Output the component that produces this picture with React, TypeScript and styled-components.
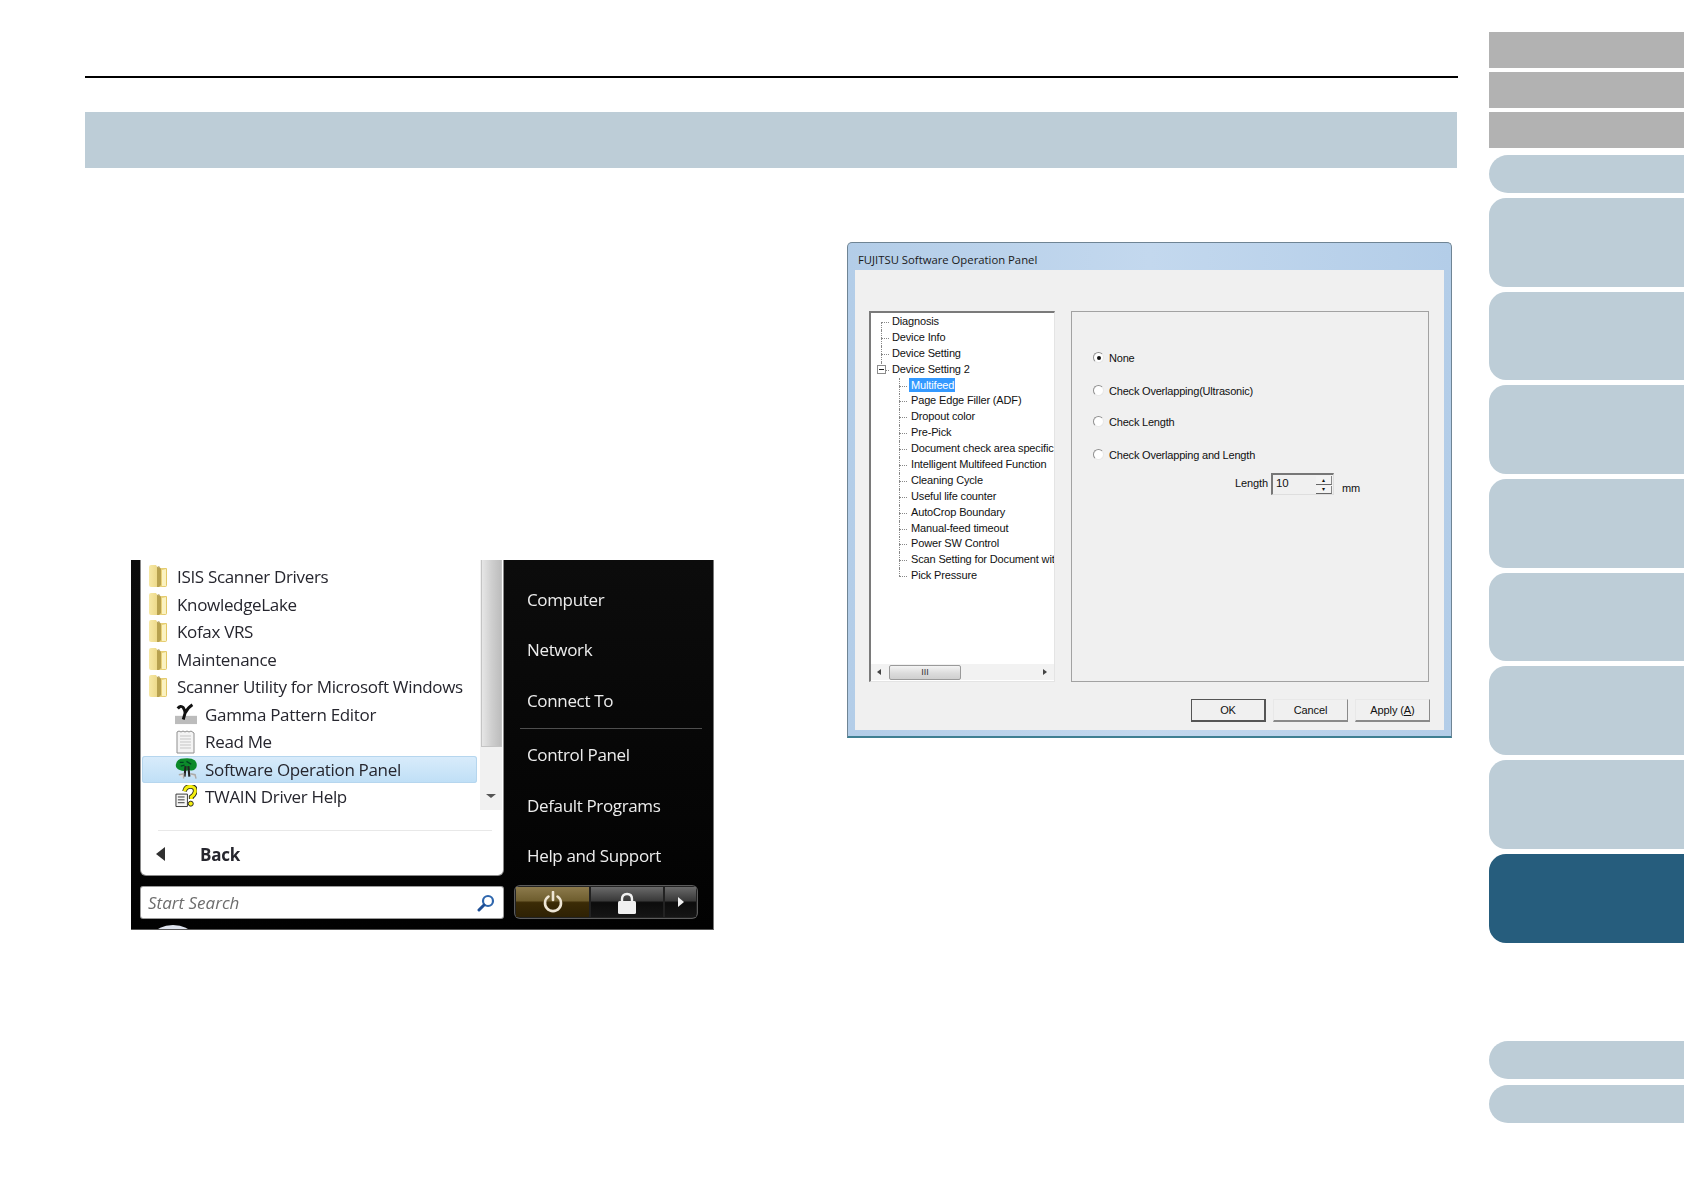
import React from "react";
import styled, { createGlobalStyle } from "styled-components";

const Global = createGlobalStyle`
  html, body { margin: 0; padding: 0; background: #fff; overflow: hidden; }
  * { box-sizing: border-box; }
`;

const Page = styled.div`
  width: 1684px; height: 1190px; display: flex; background: #fff;
  font-family: "Liberation Sans", Arial, sans-serif;
`;
const Main = styled.main`
  width: 1373px; margin-left: 85px; padding-top: 76px; flex: none;
`;
const Rule = styled.div`height: 2px; background: #000;`;
const Banner = styled.div`height: 56px; margin: 34px 1px 0 0; background: #bdcdd7;`;
const Figures = styled.div`display: flex; align-items: flex-start; margin-top: 74px;`;

/* Sidebar */
const Side = styled.nav`
  width: 195px; margin-left: 31px; padding-top: 32px; display: flex; flex-direction: column; flex: none;
`;
const GrayTab = styled.div`height: 36px; margin-bottom: 4px; background: #b2b2b2;`;
const Pill = styled.div<{ $top: number }>`
  height: 38px; margin-top: ${p => p.$top}px; background: #bdcdd7; border-radius: 19px 0 0 19px; flex: none;
`;
const Chapter = styled.div<{ $active?: boolean }>`
  height: 88.7px; margin-top: 5px; border-radius: 17px 0 0 17px; flex: none;
  background: ${p => (p.$active ? "#265d7d" : "#bdcdd7")};
`;

/* Start menu */
const StartMenu = styled.div`
  width: 583px; height: 370px; margin: 318px 0 0 46px; flex: none; display: flex; position: relative; overflow: hidden;
  background: linear-gradient(#0c0c0c, #020202);
  border-right: 1px solid #777; border-bottom: 1px solid #555;
  font-family: "Open Sans", "Noto Sans", sans-serif;
  filter: blur(0.35px);
`;
const LeftCol = styled.div`width: 372px; padding-left: 10px; flex: none; display: flex; flex-direction: column;`;
const ProgramPanel = styled.div`
  height: 315px; flex: none; background: #fff; border-radius: 0 0 5px 5px;
  box-shadow: 0 0 0 1px #8a8a8a; display: flex; flex-direction: column;
`;
const ListArea = styled.div`height: 250px; display: flex; flex: none;`;
const List = styled.div`width: 339px; padding: 3px 3px 0 1px; flex: none;`;
const Row = styled.div<{ $sub?: boolean; $hot?: boolean }>`
  height: 27.5px; display: flex; align-items: center;
  padding-left: ${p => (p.$sub ? 33 : 6)}px;
  gap: ${p => (p.$sub ? 8 : 9)}px;
  font-size: 17px; color: #26262e; white-space: nowrap; letter-spacing: -0.33px;
  border-radius: 3px;
  ${p => p.$hot && `
    background: linear-gradient(#d9ecfb, #bfdff6);
    box-shadow: inset 0 0 0 1px #b6d6ee;
  `}
`;
const IconSlot = styled.span`width: 22px; height: 24px; flex: none; display: flex; align-items: center; justify-content: center;`;
const Scroll = styled.div`
  width: 22px; background: #f1f1f1; display: flex; flex-direction: column; align-items: center; flex: none;
`;
const Thumb = styled.div`
  width: 21px; height: 187px; background: linear-gradient(90deg, #e6e6e6, #cfcfcf 50%, #bdbdbd);
  border: 1px solid #c4c4c4; border-top: none;
`;
const ScrollDown = styled.div`
  margin-top: 47px; width: 0; height: 0;
  border-left: 5px solid transparent; border-right: 5px solid transparent; border-top: 4px solid #555;
`;
const PanelSep = styled.div`height: 1px; margin: 20px 11px 0 17px; background: #e8e8e8;`;
const BackRow = styled.div`
  height: 46px; display: flex; align-items: center; padding: 3px 0 0 15px; gap: 35px;
  font-size: 17px; font-weight: 700; color: #26262e; letter-spacing: -0.25px;
`;
const BackArrow = styled.div`
  width: 0; height: 0; border-top: 7px solid transparent; border-bottom: 7px solid transparent; border-right: 9px solid #303030;
`;
const SearchBox = styled.div`
  height: 31px; margin-top: 12px; flex: none; background: #fff; border-radius: 2px; box-shadow: 0 0 0 1px #9a9a9a;
  display: flex; align-items: center; justify-content: space-between; padding: 0 8px 0 7px;
  font-size: 17px; font-style: italic; color: #6d6d6d;
`;
const Remnant = styled.div`
  position: absolute; left: 24px; bottom: -14px; width: 36px; height: 18px; border-radius: 50%; background: #dfe4ee;
`;
const RightCol = styled.div`flex: 1; padding-top: 14px; display: flex; flex-direction: column; color: #ededed;`;
const Place = styled.div`
  height: 50.5px; flex: none; padding-left: 24px; display: flex; align-items: center; font-size: 17px; letter-spacing: -0.35px;
`;
const PlaceSep = styled.div`height: 1px; flex: none; margin: 2px 11px 1px 17px; background: #4e4e4e;`;
const PowerBar = styled.div`
  width: 182px; height: 32px; margin: 5px 0 0 12px; flex: none; padding: 1px; display: flex; gap: 2px;
  border-radius: 5px; box-shadow: 0 0 0 1px #5c5c5c; background: #222;
`;
const PowerBtn = styled.div<{ $w: number; $amber?: boolean }>`
  width: ${p => p.$w}px; display: flex; align-items: center; justify-content: center; flex: none;
  background: ${p => p.$amber
    ? "linear-gradient(#8c7a4c 0%, #6f5e2f 45%, #3b2b06 52%, #2e2104 100%)"
    : "linear-gradient(#6a6a6a 0%, #3a3a3a 45%, #0c0c0c 52%, #151515 100%)"};
`;

/* Dialog */
const Dialog = styled.div`
  width: 605px; height: 496px; margin-left: 133px; flex: none; padding: 0 7px 6px 7px; display: flex; flex-direction: column;
  background: linear-gradient(90deg, #b3cde8, #c3d8ee 50%, #b3cde8);
  border: 1px solid #6f8494; border-bottom: 2px solid #3f7f92; border-radius: 5px 5px 0 0;
  font-family: "Liberation Sans", Arial, sans-serif; color: #111;
`;
const TitleBar = styled.div`
  height: 27px; flex: none; padding: 6px 0 0 3px; display: flex; align-items: center; font-family: "Open Sans", sans-serif; font-size: 11.3px; color: #1a1a1a;
`;
const Client = styled.div`
  flex: 1; background: #f0f0f0; padding: 41px 14px 0 14px; display: flex; flex-direction: column;
`;
const Panes = styled.div`display: flex; gap: 16px; height: 371px; flex: none;`;
const Tree = styled.div`
  width: 186px; flex: none; background: #fff; display: flex; flex-direction: column; position: relative;
  border-top: 2px solid #7a7a7a; border-left: 2px solid #7a7a7a; border-right: 1px solid #e4e4e4; border-bottom: 1px solid #e4e4e4;
`;
const TreeBody = styled.div`flex: 1; padding-top: 1px; overflow: hidden;`;
const TreeRow = styled.div<{ $child?: boolean; $last?: boolean; $first?: boolean }>`
  height: 15.9px; position: relative; white-space: nowrap; font-size: 11px; line-height: 15.9px;
  padding-left: ${p => (p.$child ? 40 : 21)}px; letter-spacing: -0.15px;
  &::before {
    content: ""; position: absolute; top: 8px; width: 8px;
    left: ${p => (p.$child ? 28 : 10)}px; border-top: 1px dotted #888;
  }
  &::after {
    content: ""; position: absolute; top: ${p => (p.$first ? 8 : 0)}px;
    left: ${p => (p.$child ? 28 : 10)}px;
    height: ${p => (p.$last ? 8 : p.$first ? 8 : 16)}px; border-left: 1px dotted #888;
  }
`;
const Selected = styled.span`
  display: inline-block; background: #3399ff; color: #fff; line-height: 14px; padding: 0 1px 0 2px; margin-left: -2px;
`;
const Expander = styled.span`
  position: absolute; z-index: 1; left: 6px; top: 3px; width: 9px; height: 9px; background: #fff; border: 1px solid #8c8c8c;
  &::after { content: ""; position: absolute; left: 1px; top: 3px; width: 5px; height: 1px; background: #222; }
`;
const HBar = styled.div`
  height: 16px; margin-bottom: 1px; flex: none; background: #f2f2f2; display: flex; align-items: center; padding: 0 7px 0 6px;
`;
const ArrowL = styled.div`
  width: 0; height: 0; border-top: 3px solid transparent; border-bottom: 3px solid transparent; border-right: 4px solid #444;
`;
const ArrowR = styled.div`
  width: 0; height: 0; border-top: 3px solid transparent; border-bottom: 3px solid transparent; border-left: 4px solid #444;
`;
const HThumb = styled.div`
  width: 72px; height: 15px; margin: 0 auto 0 8px; border: 1px solid #9a9a9a; border-radius: 2px;
  background: linear-gradient(#f4f4f4, #dcdcdc 55%, #cfcfcf);
  display: flex; align-items: center; justify-content: center; font-size: 9px; color: #333; letter-spacing: 0;
`;
const Options = styled.div`
  width: 358px; flex: none; border: 1px solid #a2a2a2; padding: 38px 0 0 21px; display: flex; flex-direction: column; font-size: 11px;
`;
const OptionRow = styled.div<{ $mt: number }>`
  display: flex; align-items: center; gap: 5px; height: 16px; margin-top: ${p => p.$mt}px; letter-spacing: -0.2px;
`;
const Radio = styled.span<{ $on?: boolean }>`
  width: 11px; height: 11px; margin-top: -2px; border-radius: 50%; background: #fff; position: relative; flex: none;
  border: 1px solid #8f8f8f; border-right-color: #e8e8e8; border-bottom-color: #e8e8e8;
  ${p => p.$on && `
    &::after { content: ""; position: absolute; left: 3px; top: 3px; width: 4px; height: 4px; border-radius: 50%; background: #111; }
  `}
`;
const LengthRow = styled.div`
  display: flex; align-items: flex-start; margin: 10px 0 0 142px; height: 24px; letter-spacing: -0.1px;
`;
const LengthLabel = styled.span`line-height: 20px; margin-right: 3px;`;
const Spin = styled.div`
  width: 63px; height: 22px; flex: none; display: flex; justify-content: space-between; padding: 0 1px 0 3px; line-height: 17px; font-size: 11.5px;
  border: 1px solid #dedede; border-top: 2px solid #777; border-left: 2px solid #777; background: #f0f0f0;
`;
const SpinBtns = styled.div`width: 16px; display: flex; flex-direction: column; gap: 1px; padding-top: 1px;`;
const SpinBtn = styled.div`
  flex: 1; background: #f3f3f3; border-bottom: 1px solid #666; border-right: 1px solid #888;
  display: flex; align-items: center; justify-content: center; font-size: 6px; line-height: 1;
`;
const Unit = styled.span`margin: 7px 0 0 8px; line-height: 16px;`;
const Footer = styled.div`display: flex; justify-content: flex-end; gap: 7px; margin: 17px 0 0 0;`;
const Btn = styled.div<{ $def?: boolean }>`
  width: 75px; height: 23px; display: flex; align-items: center; justify-content: center;
  background: #f0f0f0; font-size: 11px; letter-spacing: -0.1px;
  border-top: 1px solid #e8e8e8; border-left: 1px solid ${p => (p.$def ? "#555" : "#e8e8e8")};
  border-right: ${p => (p.$def ? "2px solid #555" : "1px solid #8a8a8a")};
  border-bottom: 2px solid ${p => (p.$def ? "#555" : "#8a8a8a")};
  ${p => p.$def && "border-top-color: #555;"}
`;
const Mnemonic = styled.span`text-decoration: underline;`;

const Folder = () => (
  <svg width="20" height="25" viewBox="0 0 20 25">
    <defs><linearGradient id="fg" x1="0" x2="1"><stop offset="0" stopColor="#f7e9a8" /><stop offset="1" stopColor="#e2c765" /></linearGradient></defs>
    <path d="M1 3 Q1 1 3 1 L8 1 L10 4 L18 4 Q19 4 19 5 L19 21 Q19 23 17 23 L3 23 Q1 23 1 21 Z" fill="url(#fg)" />
    <path d="M9 3 L11 2 L13 5 L13 21 L11 23 L9 23 Z" fill="#a68f3e" opacity=".75" />
    <path d="M14 6 L18 5 L18 22 L14 22 Z" fill="#fbf2c0" />
  </svg>
);
const GammaIcon = () => (
  <svg width="24" height="22" viewBox="0 0 24 22">
    <path d="M0 13 H24 V22 H0 Z" fill="#bcbcbc" />
    <path d="M3 5 Q6 1 9 4 Q11 7 11 10 L9 17 M19 1 Q14 4 11 10" fill="none" stroke="#111" strokeWidth="3.2" />
  </svg>
);
const NoteIcon = () => (
  <svg width="20" height="24" viewBox="0 0 20 24">
    <path d="M1 2 L3 1 L5 2 L7 1 L9 2 L11 1 L13 2 L15 1 L18 3 V23 H1 Z" fill="#f4f4f4" stroke="#8e8e8e" />
    <path d="M4 6 H15 M4 9 H15 M4 12 H15 M4 15 H15 M4 18 H15" stroke="#c5c5c5" />
  </svg>
);
const TreeIcon = () => (
  <svg width="23" height="22" viewBox="0 0 23 22">
    <path d="M1 6 Q2 0 9 0 Q17 -1 21 2 Q24 6 22 10 Q19 14 15 12 Q9 14 5 12 Q0 10 1 6 Z" fill="#0c8a2a" />
    <path d="M5 4 H9 M12 3 L17 6 M6 8 L10 7" stroke="#042" strokeWidth="1.4" />
    <path d="M11 8 L10 19 M14 8 L15 19" stroke="#222" strokeWidth="2.2" />
    <path d="M4 17 L9 16 L9 21 M16 16 L21 17 L22 21" stroke="#aaa" strokeWidth="1.5" fill="#ddd" />
  </svg>
);
const HelpIcon = () => (
  <svg width="23" height="23" viewBox="0 0 23 23">
    <path d="M1 9 H13 V22 H1 Z" fill="#f6f6f6" stroke="#333" />
    <path d="M3 12 H10 M3 15 H10 M3 18 H10" stroke="#333" />
    <path d="M10 6 Q11 1 16 1 Q22 1 21 7 Q20 10 17 12 L17 14" fill="none" stroke="#222" strokeWidth="5" />
    <path d="M10 6 Q11 1 16 1 Q22 1 21 7 Q20 10 17 12 L17 14" fill="none" stroke="#f4ee10" strokeWidth="3.2" />
    <circle cx="16.5" cy="19" r="2.6" fill="#f4ee10" stroke="#222" />
  </svg>
);
const SearchIcon = () => (
  <svg width="18" height="18" viewBox="0 0 18 18">
    <circle cx="11" cy="7" r="5" fill="none" stroke="#2e66ad" strokeWidth="2.2" />
    <path d="M7 11 L2 16" stroke="#1e4f96" strokeWidth="3" strokeLinecap="round" />
  </svg>
);
const PowerIcon = () => (
  <svg width="22" height="22" viewBox="0 0 22 22">
    <path d="M6.5 5.5 A8 8 0 1 0 15.5 5.5" fill="none" stroke="#eee6d5" strokeWidth="2.6" strokeLinecap="round" />
    <path d="M11 1 V9" stroke="#eee6d5" strokeWidth="2.6" strokeLinecap="round" />
  </svg>
);
const LockIcon = () => (
  <svg width="20" height="24" viewBox="0 0 20 24" style={{ marginTop: 3 }}>
    <path d="M5 10 V7 Q5 2 10 2 Q15 2 15 7 V10" fill="none" stroke="#f0f0f0" strokeWidth="2.4" />
    <rect x="1" y="9" width="18" height="13" rx="1.5" fill="#f0f0f0" />
  </svg>
);
const PlayIcon = () => (
  <svg width="8" height="12" viewBox="0 0 8 12"><path d="M1 1 L7 6 L1 11 Z" fill="#f0f0f0" /></svg>
);

const folders = ["ISIS Scanner Drivers", "KnowledgeLake", "Kofax VRS", "Maintenance", "Scanner Utility for Microsoft Windows"];
const chapters = [0, 1, 2, 3, 4, 5, 6];
const rootNodes = ["Diagnosis", "Device Info", "Device Setting"];
const childNodes = [
  "Page Edge Filler (ADF)", "Dropout color", "Pre-Pick", "Document check area specific",
  "Intelligent Multifeed Function", "Cleaning Cycle", "Useful life counter", "AutoCrop Boundary",
  "Manual-feed timeout", "Power SW Control", "Scan Setting for Document wit",
];

export default function App() {
  return (
    <Page>
      <Global />
      <Main>
        <Rule />
        <Banner />
        <Figures>
          <StartMenu>
            <LeftCol>
              <ProgramPanel>
                <ListArea>
                  <List>
                    {folders.map(f => <Row key={f}><Folder />{f}</Row>)}
                    <Row $sub><IconSlot><GammaIcon /></IconSlot>Gamma Pattern Editor</Row>
                    <Row $sub><IconSlot><NoteIcon /></IconSlot>Read Me</Row>
                    <Row $sub $hot><IconSlot><TreeIcon /></IconSlot>Software Operation Panel</Row>
                    <Row $sub><IconSlot><HelpIcon /></IconSlot>TWAIN Driver Help</Row>
                  </List>
                  <Scroll><Thumb /><ScrollDown /></Scroll>
                </ListArea>
                <PanelSep />
                <BackRow><BackArrow />Back</BackRow>
              </ProgramPanel>
              <SearchBox>Start Search<SearchIcon /></SearchBox>
              <Remnant />
            </LeftCol>
            <RightCol>
              <Place>Computer</Place>
              <Place>Network</Place>
              <Place>Connect To</Place>
              <PlaceSep />
              <Place>Control Panel</Place>
              <Place>Default Programs</Place>
              <Place>Help and Support</Place>
              <PowerBar>
                <PowerBtn $w={73} $amber><PowerIcon /></PowerBtn>
                <PowerBtn $w={72}><LockIcon /></PowerBtn>
                <PowerBtn $w={31}><PlayIcon /></PowerBtn>
              </PowerBar>
            </RightCol>
          </StartMenu>
          <Dialog>
            <TitleBar>FUJITSU Software Operation Panel</TitleBar>
            <Client>
              <Panes>
                <Tree>
                  <TreeBody>
                    {rootNodes.map((n, i) => <TreeRow key={n} $first={i === 0}>{n}</TreeRow>)}
                    <TreeRow $last><Expander />Device Setting 2</TreeRow>
                    <TreeRow $child><Selected>Multifeed</Selected></TreeRow>
                    {childNodes.map(n => <TreeRow $child key={n}>{n}</TreeRow>)}
                    <TreeRow $child $last>Pick Pressure</TreeRow>
                  </TreeBody>
                  <HBar><ArrowL /><HThumb>III</HThumb><ArrowR /></HBar>
                </Tree>
                <Options>
                  <OptionRow $mt={0}><Radio $on />None</OptionRow>
                  <OptionRow $mt={17}><Radio />Check Overlapping(Ultrasonic)</OptionRow>
                  <OptionRow $mt={15}><Radio />Check Length</OptionRow>
                  <OptionRow $mt={17}><Radio />Check Overlapping and Length</OptionRow>
                  <LengthRow>
                    <LengthLabel>Length</LengthLabel>
                    <Spin>10<SpinBtns><SpinBtn>▴</SpinBtn><SpinBtn>▾</SpinBtn></SpinBtns></Spin>
                    <Unit>mm</Unit>
                  </LengthRow>
                </Options>
              </Panes>
              <Footer>
                <Btn $def>OK</Btn>
                <Btn>Cancel</Btn>
                <Btn><span>Apply (<Mnemonic>A</Mnemonic>)</span></Btn>
              </Footer>
            </Client>
          </Dialog>
        </Figures>
      </Main>
      <Side>
        <GrayTab /><GrayTab /><GrayTab />
        <Pill $top={3} />
        {chapters.map(c => <Chapter key={c} />)}
        <Chapter $active />
        <Pill $top={98} />
        <Pill $top={6} />
      </Side>
    </Page>
  );
}
